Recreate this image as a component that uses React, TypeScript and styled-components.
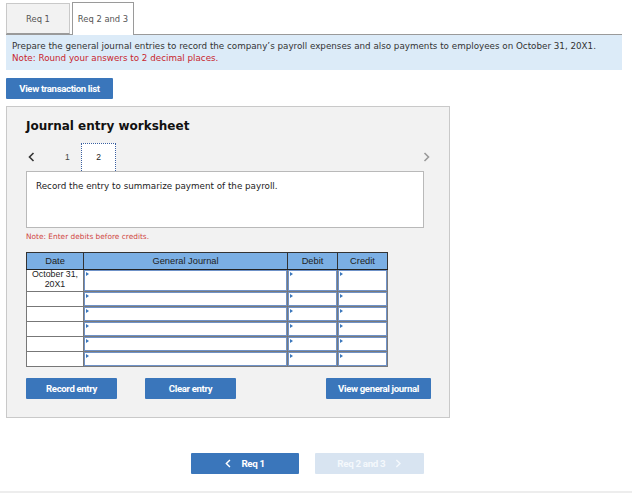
import React from "react";
import styled, { createGlobalStyle } from "styled-components";

const Global = createGlobalStyle`
  html, body { margin: 0; padding: 0; background: #fff; }
  body { font-family: "DejaVu Sans", Verdana, sans-serif; color: #222; }
  * { box-sizing: border-box; }
`;

const Page = styled.div`
  width: 632px;
  height: 495px;
  display: flex;
  flex-direction: column;
`;

const Content = styled.div`
  padding: 0 10px 0 6px;
  display: flex;
  flex-direction: column;
`;

const Tabs = styled.div`
  display: flex;
  align-items: flex-end;
  gap: 2px;
  height: 34px;
`;

const Tab = styled.div<{ $active?: boolean }>`
  height: ${(p) => (p.$active ? 33 : 31)}px;
  width: ${(p) => (p.$active ? 62 : 64)}px;
  display: flex;
  align-items: center;
  justify-content: center;
  font-size: 8.4px;
  color: #555;
  background: ${(p) => (p.$active ? "#fff" : "#f2f2f2")};
  border: 1px solid ${(p) => (p.$active ? "#9a9a9a" : "#c9c9c9")};
  border-bottom: ${(p) => (p.$active ? "none" : "1px solid #9a9a9a")};
  margin-bottom: ${(p) => (p.$active ? "-1px" : "0")};
  position: relative;
  z-index: 1;
`;

const Prompt = styled.div`
  background: #dcebf8;
  border-top: 1px solid #9a9a9a;
  height: 36px;
  padding: 5px 6px 0 6px;
  font-size: 8.75px;
  line-height: 12px;
  color: #333;
`;

const Red = styled.div`
  color: #c8262e;
`;

const BlueButton = styled.button<{ $w: number }>`
  width: ${(p) => p.$w}px;
  height: 21px;
  background: #3a76bb;
  border: none;
  border-radius: 1px;
  color: #fff;
  font-family: Roboto, "Liberation Sans", sans-serif;
  font-weight: 700;
  font-size: 9.6px;
  letter-spacing: -0.35px;
  padding: 0;
  display: flex;
  align-items: center;
  justify-content: center;
  gap: 8px;
`;

const TopButtonRow = styled.div`
  margin-top: 8px;
  display: flex;
`;

const Panel = styled.div`
  margin-top: 7px;
  width: 444px;
  height: 312px;
  background: #f2f2f2;
  border: 1px solid #c9c9c9;
  padding: 11px 0 0 19px;
  display: flex;
  flex-direction: column;
`;

const Title = styled.div`
  font-size: 12px;
  font-weight: 700;
  line-height: 16px;
  color: #111;
`;

const NavRow = styled.div`
  margin-top: 9px;
  width: 404px;
  height: 28px;
  display: flex;
  align-items: center;
`;

const Chevron = styled.span`
  display: flex;
  align-items: center;
  width: 10px;
  margin-left: 2px;
`;

const StepNum = styled.span`
  font-family: "Liberation Sans", Arial, sans-serif;
  font-size: 8.5px;
  color: #444;
  margin-left: 27px;
  width: 16px;
`;

const StepActive = styled.span`
  width: 35px;
  height: 28px;
  background: #fff;
  border: 1px dotted #3a5fa0;
  border-bottom: none;
  display: flex;
  align-items: center;
  justify-content: center;
  font-family: "Liberation Sans", Arial, sans-serif;
  font-size: 8.5px;
  color: #222;
  padding-bottom: 2px;
`;

const Spacer = styled.span`
  flex: 1;
`;

const Description = styled.div`
  width: 398px;
  height: 57px;
  background: #fff;
  border: 1px solid #b9b9b9;
  padding: 8px 9px;
  font-size: 8.75px;
  line-height: 12px;
  color: #222;
`;

const Note = styled.div`
  margin-top: 4px;
  font-size: 7.4px;
  line-height: 10px;
  color: #d0453f;
`;

const Table = styled.table`
  margin-top: 10px;
  border-collapse: collapse;
  width: 361px;
  table-layout: fixed;
  font-family: "Liberation Sans", Arial, sans-serif;
  font-size: 8.8px;
  border: 1.5px solid #6a6a6a;
`;

const Th = styled.th<{ $w: number }>`
  width: ${(p) => p.$w}px;
  height: 17px;
  background: #7bafe4;
  font-weight: 400;
  font-size: 9.3px;
  color: #222;
  border: 1px solid #333;
  border-bottom: 1.5px solid #222;
  padding: 0;
`;

const Td = styled.td<{ $h: number }>`
  height: ${(p) => p.$h}px;
  border: 1px solid #777;
  padding: 0;
  background: #fff;
  vertical-align: top;
  text-align: center;
  line-height: 9.5px;
  color: #222;
`;

const InputTd = styled.td`
  border: 1.5px solid #7a7a7a;
  padding: 0;
  background: #fff;
  position: relative;
`;

const InputBox = styled.div`
  position: absolute;
  inset: 0;
  border: 1.5px solid #6f92c8;
  background: #fff;
`;

const Marker = styled.span`
  position: absolute;
  left: 1px;
  top: 1px;
  width: 0;
  height: 0;
  border-top: 2px solid transparent;
  border-bottom: 2px solid transparent;
  border-left: 3px solid #3a76bb;
`;

const ActionRow = styled.div`
  margin-top: 11px;
  width: 405px;
  display: flex;
  justify-content: space-between;
`;

const ActionGroup = styled.div`
  display: flex;
  gap: 28px;
`;

const BottomNav = styled.div`
  margin-top: 35px;
  padding-left: 185px;
  display: flex;
  gap: 16px;
`;

const NavButton = styled(BlueButton)<{ $disabled?: boolean }>`
  background: ${(p) => (p.$disabled ? "#d8e4f1" : "#3a76bb")};
  color: ${(p) => (p.$disabled ? "#f4f8fc" : "#fff")};
  font-size: 9.8px;
  gap: 10px;
`;

const Footer = styled.div`
  margin-top: 17px;
  height: 2px;
  background: #ededed;
  width: 632px;
`;

const ChevLeft = ({ color = "#333", size = 10 }: { color?: string; size?: number }) => (
  <svg width={size * 0.7} height={size} viewBox="0 0 7 10">
    <polyline points="5.5,1 1.5,5 5.5,9" fill="none" stroke={color} strokeWidth="1.6" />
  </svg>
);

const ChevRight = ({ color = "#999", size = 10 }: { color?: string; size?: number }) => (
  <svg width={size * 0.7} height={size} viewBox="0 0 7 10">
    <polyline points="1.5,1 5.5,5 1.5,9" fill="none" stroke={color} strokeWidth="1.6" />
  </svg>
);

const rows = [22, 15, 15, 15, 15, 15];

const InputCell = () => (
  <InputTd>
    <InputBox>
      <Marker />
    </InputBox>
  </InputTd>
);

export default function App() {
  return (
    <Page>
      <Global />
      <Content>
        <Tabs>
          <Tab>Req 1</Tab>
          <Tab $active>Req 2 and 3</Tab>
        </Tabs>
        <Prompt>
          <div>
            Prepare the general journal entries to record the company’s payroll expenses and also payments to employees on October 31, 20X1.
          </div>
          <Red>Note: Round your answers to 2 decimal places.</Red>
        </Prompt>
        <TopButtonRow>
          <BlueButton $w={107}>View transaction list</BlueButton>
        </TopButtonRow>
        <Panel>
          <Title>Journal entry worksheet</Title>
          <NavRow>
            <Chevron>
              <ChevLeft color="#333" size={10} />
            </Chevron>
            <StepNum>1</StepNum>
            <StepActive>2</StepActive>
            <Spacer />
            <ChevRight color="#9a9a9a" size={10} />
          </NavRow>
          <Description>Record the entry to summarize payment of the payroll.</Description>
          <Note>Note: Enter debits before credits.</Note>
          <Table>
            <thead>
              <tr>
                <Th $w={57}>Date</Th>
                <Th $w={204}>General Journal</Th>
                <Th $w={50}>Debit</Th>
                <Th $w={50}>Credit</Th>
              </tr>
            </thead>
            <tbody>
              {rows.map((h, i) => (
                <tr key={i}>
                  <Td $h={h}>{i === 0 ? (<>October 31,<br />20X1</>) : null}</Td>
                  <InputCell />
                  <InputCell />
                  <InputCell />
                </tr>
              ))}
            </tbody>
          </Table>
          <ActionRow>
            <ActionGroup>
              <BlueButton $w={91}>Record entry</BlueButton>
              <BlueButton $w={91}>Clear entry</BlueButton>
            </ActionGroup>
            <BlueButton $w={105}>View general journal</BlueButton>
          </ActionRow>
        </Panel>
        <BottomNav>
          <NavButton $w={108}>
            <ChevLeft color="#fff" size={9} />
            <span>Req 1</span>
          </NavButton>
          <NavButton $w={109} $disabled>
            <span>Req 2 and 3</span>
            <ChevRight color="#f4f8fc" size={9} />
          </NavButton>
        </BottomNav>
      </Content>
      <Footer />
    </Page>
  );
}
